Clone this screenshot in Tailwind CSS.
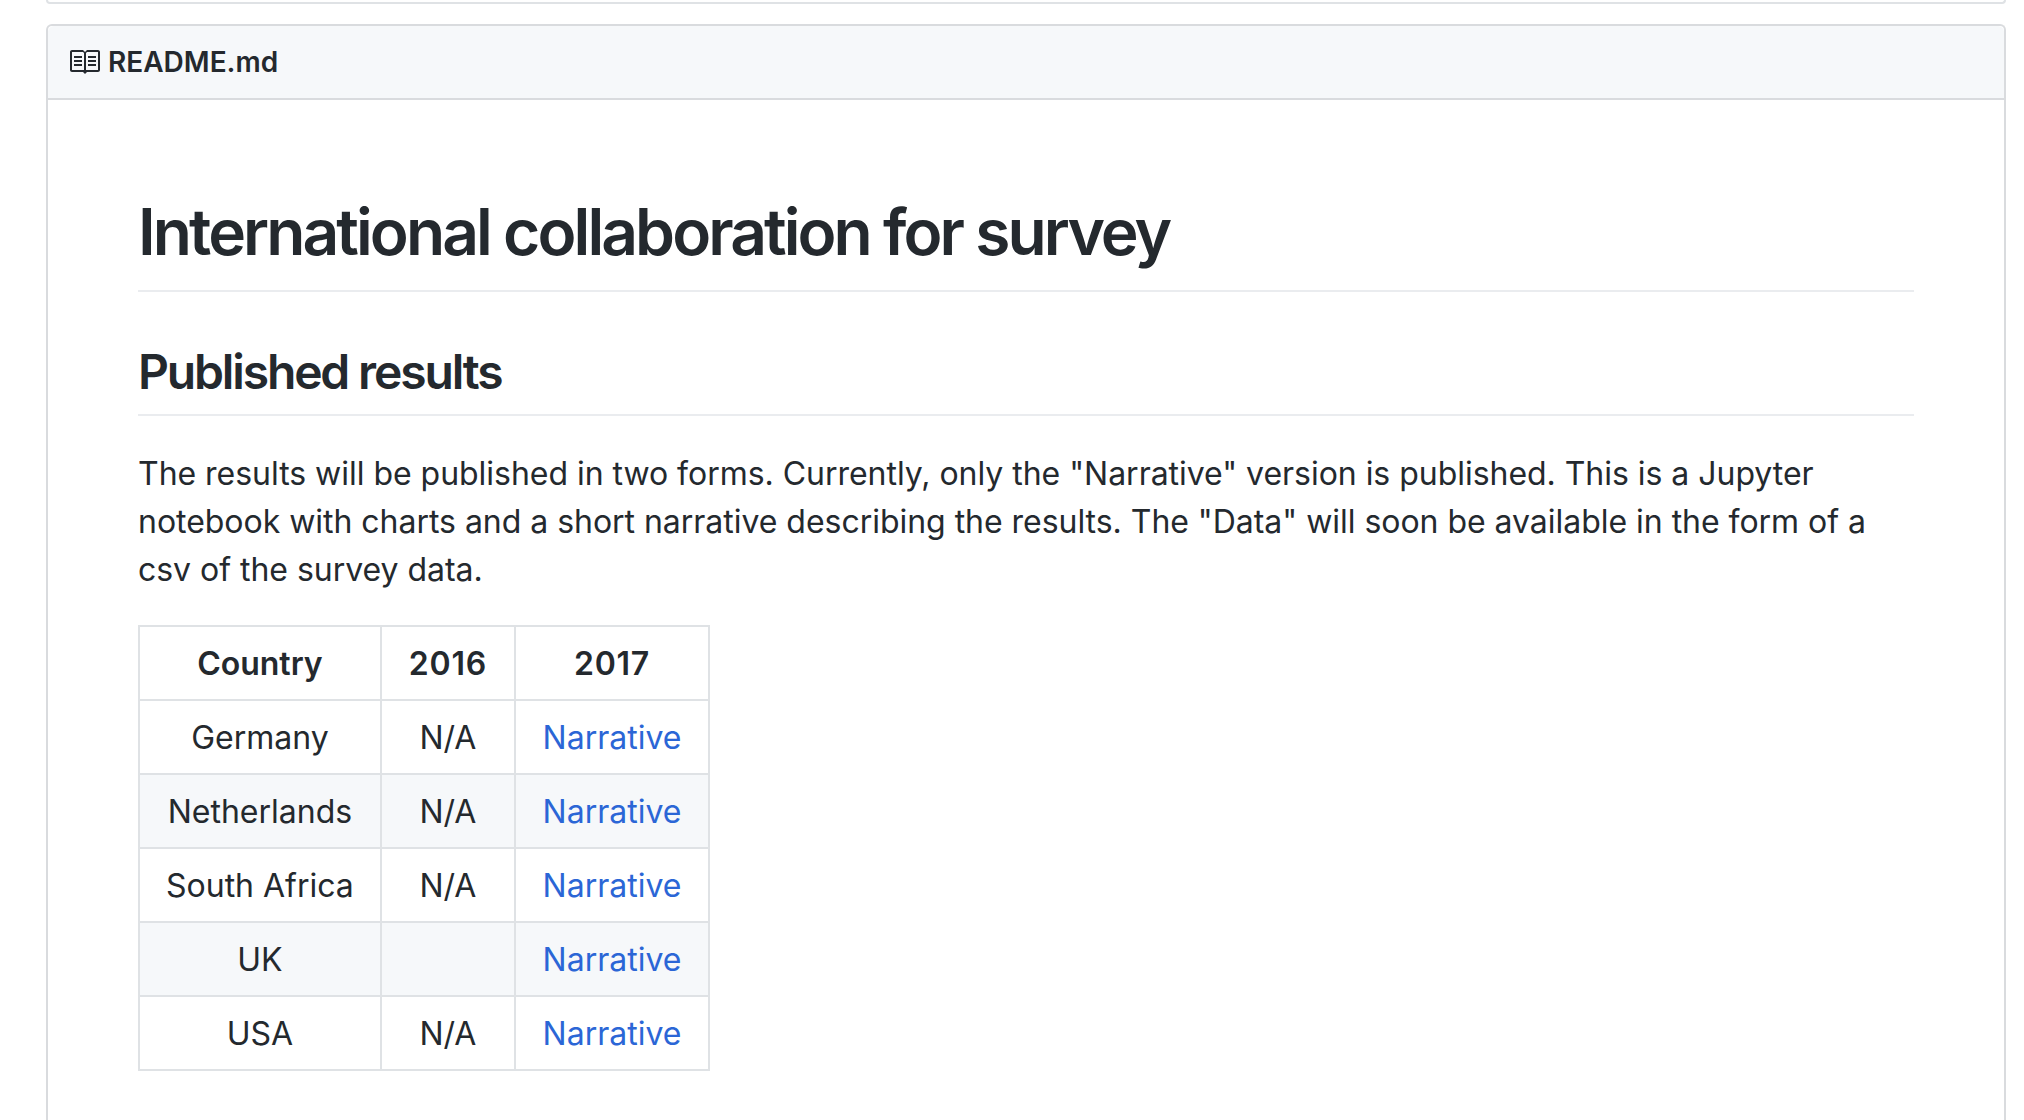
<!DOCTYPE html>
<html lang="en">
<head>
    <meta charset="UTF-8">
    <title>README.md</title>
    <script src="https://cdn.jsdelivr.net/npm/@tailwindcss/browser@4"></script>
</head>
<body class="bg-white text-[#24292e] font-['Inter',sans-serif] h-[1120px] overflow-hidden">
    <div class="pl-[46px] pr-[18px]">
        <!-- Previous box, only its bottom edge is visible -->
        <div class="h-[4px] border-x-2 border-b-2 border-[#dfe2e5] rounded-b-md"></div>

        <!-- Readme box, runs off the bottom of the window -->
        <div class="mt-[20px] border-2 border-b-0 border-[#d9dbde] rounded-t-md h-[1096px]">
            <div class="h-[74px] bg-[#f6f8fa] border-b-2 border-[#d9dbde] flex items-center pl-[20px] gap-[8px] rounded-t-md">
                <svg class="w-[32px] h-[32px] fill-[#24292e]" viewBox="0 0 16 16">
                    <path fill-rule="evenodd" d="M3 5h4v1H3V5zm0 3h4V7H3v1zm0 2h4V9H3v1zm11-5h-4v1h4V5zm0 2h-4v1h4V7zm0 2h-4v1h4V9zm2-6v9c0 .55-.45 1-1 1H9.5l-1 1-1-1H2c-.55 0-1-.45-1-1V3c0-.55.45-1 1-1h5.5l1 1 1-1H15c.55 0 1 .45 1 1zm-8 .5L7.5 3H2v9h6V3.5zm7-.5H9.5l-.5.5V12h6V3z"></path>
                </svg>
                <span class="text-[28px] font-semibold">README.md</span>
            </div>

            <div class="px-[90px] pt-[92px]">
                <h1 class="text-[64px] leading-[80px] font-semibold tracking-[-2.9px] pb-[18px] border-b-2 border-[#eaecef]">International collaboration for survey</h1>
                <h2 class="mt-[50px] text-[48px] leading-[60px] font-semibold tracking-[-2.15px] pb-[12px] border-b-2 border-[#eaecef]">Published results</h2>
                <p class="mt-[34px] text-[32px] leading-[48px] tracking-[-0.03px]">The results will be published in two forms. Currently, only the "Narrative" version is published. This is a Jupyter notebook with charts and a short narrative describing the results. The "Data" will soon be available in the form of a csv of the survey data.</p>

                <table class="mt-[31px] border-collapse text-[32px] leading-[48px] text-center">
                    <thead>
                        <tr>
                            <th class="border-2 border-[#dfe2e5] px-[26px] pt-[13px] pb-[11px] font-semibold">Country</th>
                            <th class="border-2 border-[#dfe2e5] px-[27px] pt-[13px] pb-[11px] font-semibold tracking-[0.8px]">2016</th>
                            <th class="border-2 border-[#dfe2e5] px-[26px] pt-[13px] pb-[11px] font-semibold tracking-[0.8px]">2017</th>
                        </tr>
                    </thead>
                    <tbody>
                        <tr>
                            <td class="border-2 border-[#dfe2e5] px-[26px] pt-[13px] pb-[11px]">Germany</td>
                            <td class="border-2 border-[#dfe2e5] px-[26px] pt-[13px] pb-[11px]">N/A</td>
                            <td class="border-2 border-[#dfe2e5] px-[26.5px] pt-[13px] pb-[11px] text-[#2b66d6]">Narrative</td>
                        </tr>
                        <tr class="bg-[#f6f8fa]">
                            <td class="border-2 border-[#dfe2e5] px-[26px] pt-[13px] pb-[11px]">Netherlands</td>
                            <td class="border-2 border-[#dfe2e5] px-[26px] pt-[13px] pb-[11px]">N/A</td>
                            <td class="border-2 border-[#dfe2e5] px-[26.5px] pt-[13px] pb-[11px] text-[#2b66d6]">Narrative</td>
                        </tr>
                        <tr>
                            <td class="border-2 border-[#dfe2e5] px-[26px] pt-[13px] pb-[11px]">South Africa</td>
                            <td class="border-2 border-[#dfe2e5] px-[26px] pt-[13px] pb-[11px]">N/A</td>
                            <td class="border-2 border-[#dfe2e5] px-[26.5px] pt-[13px] pb-[11px] text-[#2b66d6]">Narrative</td>
                        </tr>
                        <tr class="bg-[#f6f8fa]">
                            <td class="border-2 border-[#dfe2e5] px-[26px] pt-[13px] pb-[11px]">UK</td>
                            <td class="border-2 border-[#dfe2e5] px-[26px] pt-[13px] pb-[11px]"></td>
                            <td class="border-2 border-[#dfe2e5] px-[26.5px] pt-[13px] pb-[11px] text-[#2b66d6]">Narrative</td>
                        </tr>
                        <tr>
                            <td class="border-2 border-[#dfe2e5] px-[26px] pt-[13px] pb-[11px]">USA</td>
                            <td class="border-2 border-[#dfe2e5] px-[26px] pt-[13px] pb-[11px]">N/A</td>
                            <td class="border-2 border-[#dfe2e5] px-[26.5px] pt-[13px] pb-[11px] text-[#2b66d6]">Narrative</td>
                        </tr>
                    </tbody>
                </table>
            </div>
        </div>
    </div>
</body>
</html>
